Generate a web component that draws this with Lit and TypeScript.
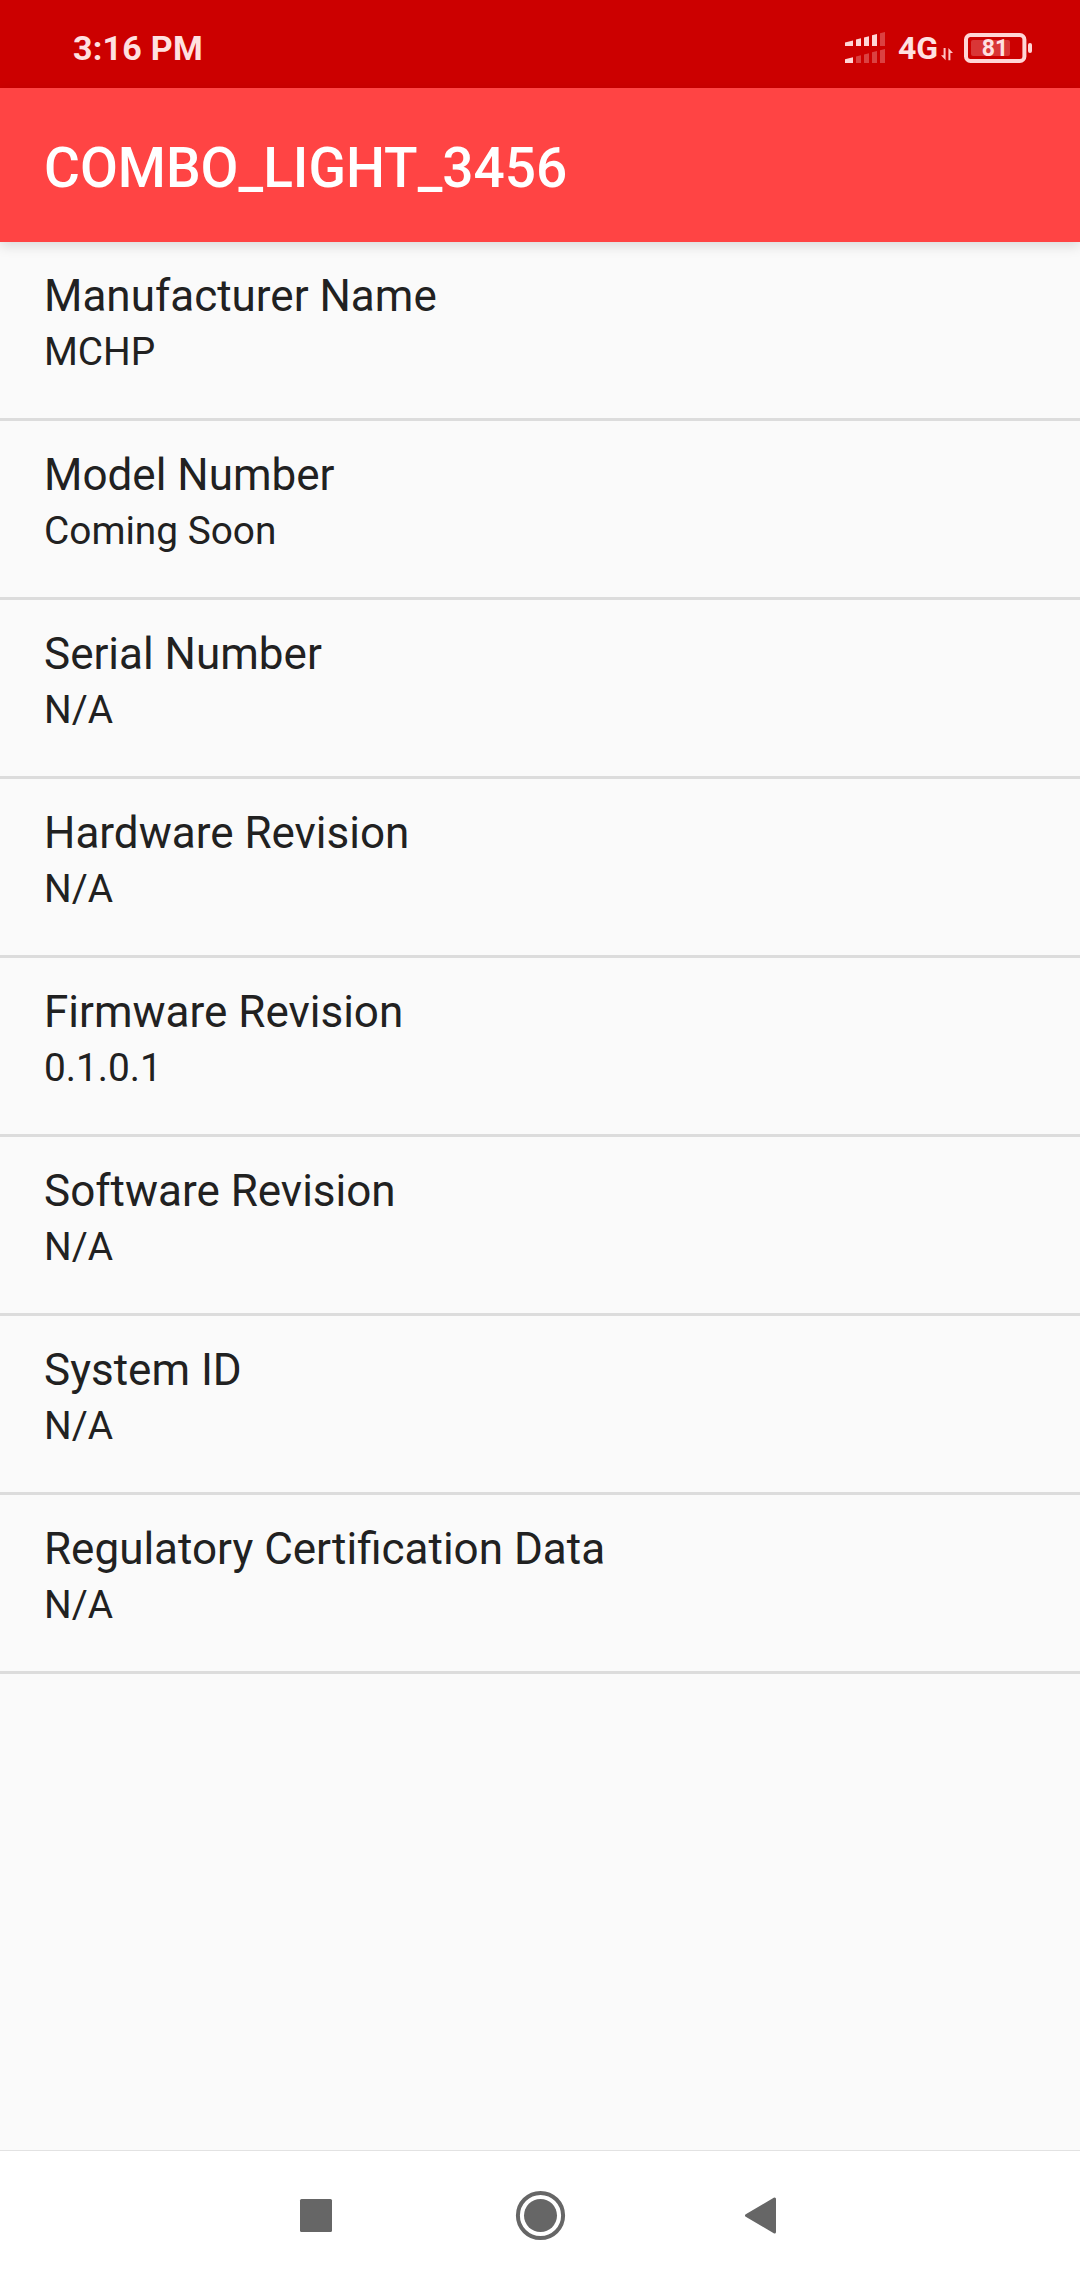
import { LitElement, html, css } from "lit";
import { customElement, property } from "lit/decorators.js";

@customElement("status-bar")
class StatusBar extends LitElement {
  @property() time = "";
  @property({ type: Number }) level = 0;

  static styles = css`
    :host { display: flex; height: 88px; background: #cc0000; color: #ffe1e1; padding: 8px 48px 0 73px; box-sizing: border-box; justify-content: space-between; align-items: center; }
    .time { font-size: 34px; font-weight: 700; letter-spacing: 0.25px; line-height: 40px; white-space: pre; }
    .icons { display: flex; align-items: center; }
    .net { font-size: 32px; font-weight: 700; line-height: 32px; margin-left: 12px; width: 43px; }
    svg { display: block; }
    .battery { display: grid; align-items: center; margin-left: 11px; }
    .battery > * { grid-area: 1 / 1; }
    .level { font-size: 23px; font-weight: 700; line-height: 32px; width: 60px; padding: 1px 0 0 1px; text-align: center; }
  `;

  render() {
    return html`
      <span class="time">${this.time}</span>
      <div class="icons">
        <svg width="41" height="32" viewBox="845 32 41 32" fill="#ffd6d6">
          <path d="M845 42.5L853 40.5V46H845ZM856 39.5L861 38.3V46H856ZM864 37.5L869 36.3V46H864ZM872 35.3L877 34V46H872Z" />
          <path d="M880 33.3L885 32V46H880Z" opacity=".3" />
          <path d="M845 59.3L853 57.3V63H845Z" />
          <path d="M856 56.5L861 55.3V63H856ZM864 54.5L869 53.3V63H864ZM872 52.3L877 51V63H872ZM880 50.3L885 49V63H880Z" opacity=".3" />
        </svg>
        <span class="net">4G</span>
        <svg width="12" height="32" viewBox="941 32 12 32" fill="#ffc4c4">
          <path d="M943.6 48H945.6V60.3L941 55.3H943.6Z" />
          <path d="M950.4 60.3H948.4V48L953 53H950.4Z" />
        </svg>
        <div class="battery">
          <svg width="68" height="32" viewBox="964 31 68 32">
            <rect x="966" y="34" width="58.4" height="26" rx="4.5" fill="none" stroke="#ffd6d6" stroke-width="4" />
            <rect x="971" y="39" width="39" height="16" rx="2" fill="#ffd6d6" opacity=".25" />
            <rect x="1028" y="42" width="4" height="10" rx="2" fill="#ffd6d6" />
          </svg>
          <span class="level">${this.level}</span>
        </div>
      </div>
    `;
  }
}

@customElement("app-root")
class AppRoot extends LitElement {
  static styles = css`
    :host { display: flex; flex-direction: column; height: 2280px; background: #fafafa; font-family: Roboto, sans-serif; color: #212121; }
    .bar { height: 154px; box-sizing: border-box; background: #ff4444; color: #fff; padding: 48px 44px 0; font-size: 55px; font-weight: 500; line-height: 64px; box-shadow: 0 4px 12px rgba(0, 0, 0, 0.13); }
    .list { flex: 1; }
    .row { height: 179px; box-sizing: border-box; padding: 28px 44px 0; border-bottom: 3px solid #dcdcdc; }
    .name { font-size: 44px; line-height: 52px; }
    .value { font-size: 38.8px; line-height: 60px; }
    .nav { height: 130px; box-sizing: border-box; background: #fff; border-top: 1px solid #e2e2e2; }
    .nav svg { display: block; }
  `;

  rows = [
    ["Manufacturer Name", "MCHP"],
    ["Model Number", "Coming Soon"],
    ["Serial Number", "N/A"],
    ["Hardware Revision", "N/A"],
    ["Firmware Revision", "0.1.0.1"],
    ["Software Revision", "N/A"],
    ["System ID", "N/A"],
    ["Regulatory Certification Data", "N/A"],
  ];

  render() {
    return html`
      <status-bar time="3:16 PM" level="81"></status-bar>
      <div class="bar">COMBO_LIGHT_3456</div>
      <div class="list">
        ${this.rows.map(([n, v]) => html`<div class="row"><div class="name">${n}</div><div class="value">${v}</div></div>`)}
      </div>
      <div class="nav">
        <svg width="1080" height="129" viewBox="0 2151 1080 129" fill="#666">
          <rect x="300" y="2199" width="32" height="33" rx="1.5" />
          <circle cx="540.5" cy="2215.5" r="22.6" fill="none" stroke="#666" stroke-width="4" />
          <circle cx="540.5" cy="2215.5" r="16.5" />
          <path d="M746.5 2215.5L774.5 2199V2232Z" stroke="#666" stroke-width="3" stroke-linejoin="round" />
        </svg>
      </div>
    `;
  }
}
